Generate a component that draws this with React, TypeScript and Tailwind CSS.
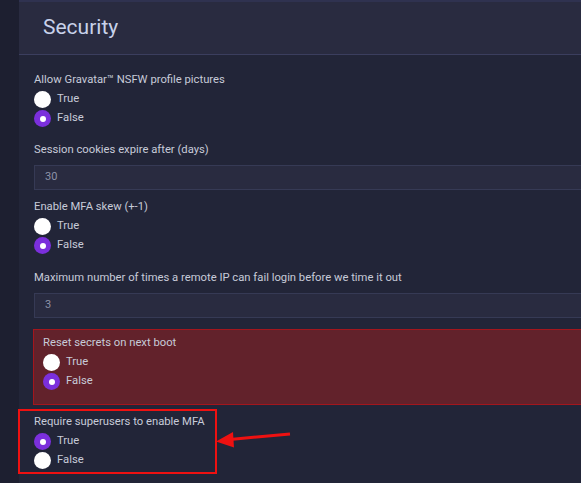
import React from "react";

type Opt = { label: string; checked: boolean };

const Radio = ({ label, checked }: Opt) => (
  <div className="flex items-center h-[19px]">
    {checked ? (
      <span className="w-[17px] h-[17px] rounded-full bg-[#7b2fdc] flex items-center justify-center">
        <span className="w-[6px] h-[6px] rounded-full bg-white" />
      </span>
    ) : (
      <span className="w-[17px] h-[17px] rounded-full bg-white" />
    )}
    <span className="ml-[6px] text-[11.25px] text-[#c7cbd8]">{label}</span>
  </div>
);

const Label = ({ children }: { children: React.ReactNode }) => (
  <div className="h-[19px] flex items-center text-[11.25px] text-[#c7cbd8]">{children}</div>
);

const BoolField = ({ label, value, className = "" }: { label: string; value: boolean; className?: string }) => (
  <div className={className}>
    <Label>{label}</Label>
    <Radio label="True" checked={value} />
    <Radio label="False" checked={!value} />
  </div>
);

const TextField = ({ label, value, className = "" }: { label: string; value: string; className?: string }) => (
  <div className={className}>
    <Label>{label}</Label>
    <div className="mt-[5px] -mr-[20px] h-[25px] bg-[#292b40] border border-[#363a55] flex items-center pl-[10px] text-[11px] text-[#8d92a8]">
      {value}
    </div>
  </div>
);

export default function App() {
  return (
    <div
      className="relative w-full h-[483px] overflow-hidden bg-[#1d1f30] flex"
      style={{ fontFamily: "Roboto, 'Liberation Sans', sans-serif" }}
    >
      <div className="w-[19px] shrink-0" />
      <div className="flex-1 min-w-0 bg-[#222538]">
        <div className="h-[55px] bg-[#292b40] border-t-2 border-t-[#2f3250] border-b border-b-[#3b3e5e] flex items-center pl-[24px]">
          <h1 className="text-[21px] text-[#c8d2ea]">Security</h1>
        </div>
        <div className="pl-[15px] pt-[16px]">
          <BoolField label="Allow Gravatar™ NSFW profile pictures" value={false} />
          <TextField className="mt-[13px]" label="Session cookies expire after (days)" value="30" />
          <BoolField className="mt-[8px]" label="Enable MFA skew (+-1)" value={false} />
          <TextField
            className="mt-[14px]"
            label="Maximum number of times a remote IP can fail login before we time it out"
            value="3"
          />
          <div className="mt-[11px] -ml-[1px] -mr-[20px] h-[76px] bg-[#62222b] border border-[#a3161d] pl-[9px] pt-[4px]">
            <BoolField label="Reset secrets on next boot" value={false} />
          </div>
          <BoolField className="mt-[8px]" label="Require superusers to enable MFA" value={true} />
        </div>
      </div>

      {/* annotation overlay */}
      <div className="absolute left-[18px] top-[409px] w-[199px] h-[65px] border-2 border-[#ee1111]" />
      <svg className="absolute left-0 top-0" width="581" height="483" viewBox="0 0 581 483">
        <line x1="290" y1="434" x2="230" y2="439.5" stroke="#ee1111" strokeWidth="3" />
        <polygon points="216,441.5 233,432 234,447.5" fill="#ee1111" />
      </svg>
    </div>
  );
}
